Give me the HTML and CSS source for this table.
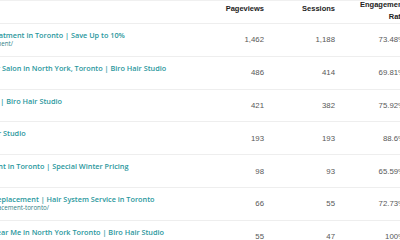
FILE: index.html
```html
<!DOCTYPE html>
<html lang="en">
<head>
<meta charset="utf-8">
<title>Pages report</title>
<link rel="stylesheet" href="styles.css">
</head>
<body>
<div class="report">
  <div class="table">
    <div class="row head">
      <div class="cell page-col">Page title and URL</div>
      <div class="cell num">Pageviews</div>
      <div class="cell num">Sessions</div>
      <div class="cell num two">Engagement<br>Rate</div>
    </div>
    <div class="row">
      <div class="cell page-col"><span class="t">Hair Loss Treatment in Toronto | Save Up to 10%</span><span class="u">/hair-loss-treatment/</span></div>
      <div class="cell num">1,462</div>
      <div class="cell num">1,188</div>
      <div class="cell num">73.48%</div>
    </div>
    <div class="row">
      <div class="cell page-col"><span class="t">The Best Hair Salon in North York, Toronto | Biro Hair Studio</span><span class="u">/</span></div>
      <div class="cell num">486</div>
      <div class="cell num">414</div>
      <div class="cell num">69.81%</div>
    </div>
    <div class="row">
      <div class="cell page-col"><span class="t">Hair Services | Biro Hair Studio</span><span class="u">/services/</span></div>
      <div class="cell num">421</div>
      <div class="cell num">382</div>
      <div class="cell num">75.92%</div>
    </div>
    <div class="row">
      <div class="cell page-col"><span class="t">Visit Biro Hair Studio</span><span class="u">/contact/</span></div>
      <div class="cell num">193</div>
      <div class="cell num">193</div>
      <div class="cell num">88.6%</div>
    </div>
    <div class="row">
      <div class="cell page-col"><span class="t">PRP Treatment in Toronto | Special Winter Pricing</span><span class="u">/prp/</span></div>
      <div class="cell num">98</div>
      <div class="cell num">93</div>
      <div class="cell num">65.59%</div>
    </div>
    <div class="row">
      <div class="cell page-col"><span class="t">Men's Hair Replacement | Hair System Service in Toronto</span><span class="u">/mens-hair-replacement-toronto/</span></div>
      <div class="cell num">66</div>
      <div class="cell num">55</div>
      <div class="cell num">72.73%</div>
    </div>
    <div class="row">
      <div class="cell page-col"><span class="t">Hair Salon Near Me in North York Toronto | Biro Hair Studio</span><span class="u">/salon/</span></div>
      <div class="cell num">55</div>
      <div class="cell num">47</div>
      <div class="cell num">100%</div>
    </div>
  </div>
</div>
</body>
</html>
```
FILE: styles.css
```css
html, body {
  margin: 0;
  padding: 0;
  background: #ffffff;
}
body {
  width: 400px;
  height: 240px;
  overflow: hidden;
}
.table {
  margin-left: -93px;
  width: 498px;
  border-top: 1px solid #f0f0f0;
}
.row {
  display: grid;
  grid-template-columns: 293px 64px 71px 70px;
  height: 32.8px;
  box-sizing: border-box;
  border-top: 1px solid #eeeeee;
  align-items: center;
}
.row.head {
  height: 22px;
  border-top: none;
  align-items: start;
  font-family: "Liberation Sans", Arial, sans-serif;
  font-weight: 700;
  font-size: 7.5px;
  line-height: 11px;
  color: #222222;
}
.row.head .num {
  padding-top: 2px;
  font-size: 7.5px;
  color: #222222;
}
.row.head .two {
  padding-top: 0;
  margin-top: -2px;
  line-height: 11.5px;
}
.row.head .page-col {
  visibility: hidden;
}
.cell {
  white-space: nowrap;
}
.num {
  text-align: right;
  font-family: "Liberation Sans", Arial, sans-serif;
  font-size: 7.8px;
  color: #585858;
}
.page-col {
  align-self: start;
  display: flex;
  flex-direction: column;
  padding-top: 6px;
  padding-left: 46px;
  font-family: "Open Sans", sans-serif;
}
.t {
  font-size: 7.3px;
  font-weight: 600;
  line-height: 10px;
  color: #2a979d;
}
.u {
  font-size: 6.2px;
  font-weight: 500;
  line-height: 8px;
  color: #2f7f86;
}
```
